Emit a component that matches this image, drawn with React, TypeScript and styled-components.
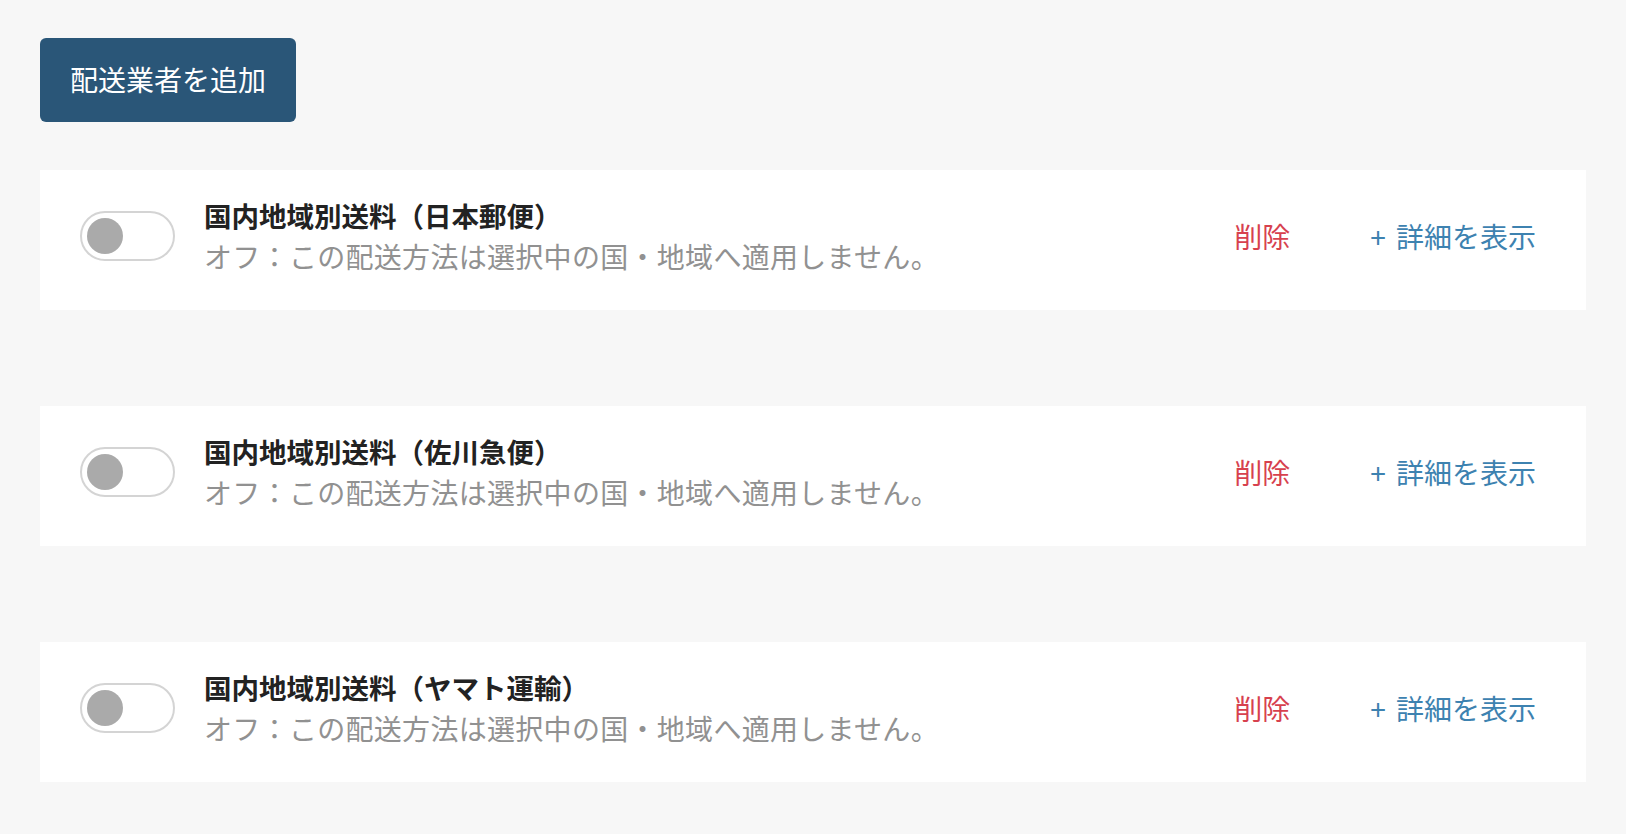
import React from 'react';
import styled, { createGlobalStyle } from 'styled-components';

const GlobalStyle = createGlobalStyle`
	html, body {
		margin: 0;
		padding: 0;
		background: #f7f7f7;
	}

	body {
		font-family: 'Noto Sans CJK JP', 'Noto Sans', sans-serif;
	}
`;

// Styles
const Page = styled.div`
	display: flex;
	flex-direction: column;
	align-items: flex-start;
	padding: 38px 40px 0;
	min-height: 834px;
	box-sizing: border-box;
`;

const AddButton = styled.button`
	height: 84px;
	padding: 0 30px 3px;
	border: none;
	border-radius: 6px;
	background: #2a5678;
	color: #fff;
	font-family: inherit;
	font-size: 28px;
	cursor: pointer;
`;

const List = styled.ul`
	list-style: none;
	margin: 48px 0 0;
	padding: 0;
	width: 100%;
	display: flex;
	flex-direction: column;
	gap: 96px;
`;

const Card = styled.li`
	height: 140px;
	background: #fff;
	display: flex;
	align-items: center;
	padding: 0 50px 8px 40px;
	box-sizing: border-box;
`;

const Toggle = styled.span<{ $on?: boolean }>`
	flex: none;
	display: flex;
	align-items: center;
	width: 95px;
	height: 50px;
	padding: 0 5px;
	box-sizing: border-box;
	border: 2px solid #d4d4d4;
	border-radius: 25px;
	justify-content: ${(p) => (p.$on ? 'flex-end' : 'flex-start')};

	&::before {
		content: '';
		width: 36px;
		height: 36px;
		border-radius: 50%;
		background: ${(p) => (p.$on ? '#2a5678' : '#aaaaaa')};
	}
`;

const Info = styled.div`
	margin-left: 29px;
	display: flex;
	flex-direction: column;
	line-height: 41px;
`;

const Title = styled.span`
	font-size: 27.5px;
	font-weight: 700;
	color: #222;
`;

const Note = styled.span`
	font-size: 28px;
	letter-spacing: 0.3px;
	color: #919191;
`;

const Actions = styled.div`
	margin-left: auto;
	display: flex;
	align-items: center;
	gap: 80px;
	font-size: 28px;
`;

const LinkText = styled.a<{ $danger?: boolean }>`
	color: ${(p) => (p.$danger ? '#d7414e' : '#3d82b0')};
	text-decoration: none;
	cursor: pointer;
	word-spacing: 4px;
`;

const carriers = ['日本郵便', '佐川急便', 'ヤマト運輸'];

function App() {
	return (
		<Page>
			<GlobalStyle />
			<AddButton>配送業者を追加</AddButton>

			<List>
				{carriers.map((name) => (
					<Card key={name}>
						<Toggle />
						<Info>
							<Title>国内地域別送料（{name}）</Title>
							<Note>オフ：この配送方法は選択中の国・地域へ適用しません。</Note>
						</Info>
						<Actions>
							<LinkText $danger>削除</LinkText>
							<LinkText>+ 詳細を表示</LinkText>
						</Actions>
					</Card>
				))}
			</List>
		</Page>
	);
}

export default App;
